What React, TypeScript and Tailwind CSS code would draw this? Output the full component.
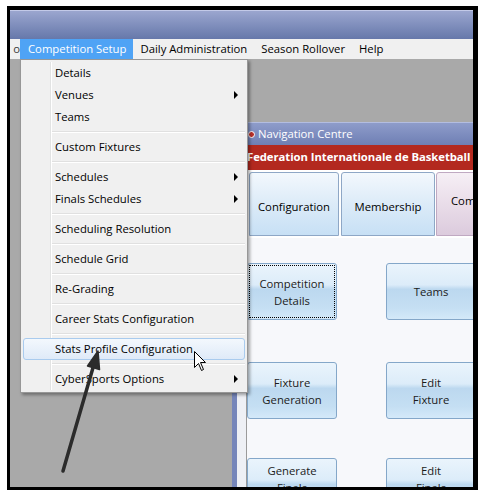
type MenuEntry = { label?: string; sub?: boolean; active?: boolean; sep?: boolean };

const menuItems: MenuEntry[] = [
  { label: 'Details' },
  { label: 'Venues', sub: true },
  { label: 'Teams' },
  { sep: true },
  { label: 'Custom Fixtures' },
  { sep: true },
  { label: 'Schedules', sub: true },
  { label: 'Finals Schedules', sub: true },
  { sep: true },
  { label: 'Scheduling Resolution' },
  { sep: true },
  { label: 'Schedule Grid' },
  { sep: true },
  { label: 'Re-Grading' },
  { sep: true },
  { label: 'Career Stats Configuration' },
  { sep: true },
  { label: 'Stats Profile Configuration', active: true },
  { sep: true },
  { label: 'CyberSports Options', sub: true },
];

function SubArrow() {
  return <div className="ml-auto mr-[7px] h-0 w-0 border-y-[4px] border-l-[4px] border-y-transparent border-l-black" />;
}

function MenuRow({ item }: { item: MenuEntry }) {
  if (item.sep) {
    return (
      <div className="flex h-[8px]">
        <div className="w-[28px] border-r border-[#e2e3e3]" />
        <div className="flex flex-1 items-center border-l border-white">
          <div className="h-[2px] w-full border-t border-b border-t-[#e0e0e0] border-b-white" />
        </div>
      </div>
    );
  }
  if (item.active) {
    return (
      <div className="flex h-[22px] items-center rounded-[3px] border border-[#a9cbee] bg-gradient-to-b from-[#f3f8fd] to-[#dfeaf8] pl-[31px]">
        <span>{item.label}</span>
        {item.sub && <SubArrow />}
      </div>
    );
  }
  return (
    <div className="flex h-[22px]">
      <div className="w-[28px] border-r border-[#e2e3e3]" />
      <div className="flex flex-1 items-center border-l border-white pl-[3px]">
        <span>{item.label}</span>
        {item.sub && <SubArrow />}
      </div>
    </div>
  );
}

function BigButton({ lines, focused, top }: { lines: string[]; focused?: boolean; top?: boolean }) {
  return (
    <div
      className={
        'flex h-[57px] w-[90px] shrink-0 flex-col items-center rounded-[3px] border border-[#84a7c9] bg-[linear-gradient(to_bottom,#eaf4fc_0%,#dcecf9_38%,#bcd8ef_46%,#c5dff3_80%,#d4e9f9_100%)] leading-[17px] text-[#1b1b1b] ' +
        (top ? 'justify-start pt-[3px] ' : 'justify-center ') +
        (focused ? 'outline outline-1 outline-offset-[-3px] outline-dotted outline-black' : '')
      }
    >
      {lines.map((l) => (
        <span key={l}>{l}</span>
      ))}
    </div>
  );
}

export default function App() {
  return (
    <div className="relative h-[496px] w-[485px] overflow-hidden bg-white font-['Open_Sans','Noto_Sans',sans-serif] text-[11.3px] text-black">
      <div className="ml-[7px] mt-[6px] h-[484px] w-[471px] bg-black pb-[3px] pl-[3px] pr-[5px] pt-[4px]">
        <div className="flex h-full w-full flex-col overflow-hidden">
          {/* main title bar */}
          <div className="h-[29px] border-t border-[#c3cae8] bg-gradient-to-b from-[#9ba6cf] to-[#6678aa]" />

          {/* menu bar */}
          <div className="flex h-[20px] items-center bg-[#f0f0f0] leading-[20px]">
            <div className="w-[10px] overflow-hidden text-right text-[#3a3a3a]">o</div>
            <div className="bg-[#4fa3f5] px-[7px] pl-[8px] text-white">Competition Setup</div>
            <div className="px-[7px]">Daily Administration</div>
            <div className="px-[7px]">Season Rollover</div>
            <div className="px-[7px]">Help</div>
          </div>

          {/* MDI area */}
          <div className="relative flex-1 overflow-hidden bg-[#a9a9a9] pl-[222px] pt-[63px]">
            <div className="flex w-[320px] flex-col">
              <div className="flex h-[23px] items-center border-t border-[#b3bde0] bg-gradient-to-b from-[#8e9cca] to-[#6f7fb4] pl-[16px] text-white">
                <div className="mr-[3px] h-[7px] w-[7px] rounded-full border border-white bg-[#b8312a]" />
                <span>Navigation Centre</span>
              </div>
              <div className="flex h-[400px]">
                <div className="w-[5px] bg-[#7686ba]" />
                <div className="w-[10px] border-r border-[#9a9a9a] bg-[#eef0f5]" />
                <div className="flex flex-1 flex-col bg-[#f7f8fb]">
                  <div className="flex h-[25px] items-center bg-[#b3291f] font-bold tracking-[-0.05px] text-white">
                    Federation Internationale de Basketball
                  </div>
                  <div className="flex h-[68px] bg-white pl-[2px] pt-[2px]">
                    <div className="flex h-[64px] w-[90px] items-center justify-center rounded-t-[3px] border border-[#8ea7c6] bg-gradient-to-b from-[#f3f8fd] via-[#dcebf8] to-[#c7e0f5] pt-[6px]">
                      Configuration
                    </div>
                    <div className="ml-[2px] flex h-[64px] w-[94px] items-center justify-center rounded-t-[3px] border border-[#8ea7c6] bg-gradient-to-b from-[#f3f8fd] via-[#dcebf8] to-[#c7e0f5] pt-[6px]">
                      Membership
                    </div>
                    <div className="ml-[1px] flex h-[64px] w-[100px] items-center rounded-t-[3px] border border-[#c0a9c2] bg-gradient-to-b from-[#f6eff5] to-[#dccbdd] pb-[6px] pl-[14px]">
                      Competition
                    </div>
                  </div>
                  <div className="mt-[25px] flex gap-[49px]">
                    <BigButton lines={['Competition', 'Details']} focused />
                    <BigButton lines={['Teams']} />
                  </div>
                  <div className="mt-[42px] flex gap-[49px]">
                    <BigButton lines={['Fixture', 'Generation']} />
                    <BigButton lines={['Edit', 'Fixture']} />
                  </div>
                  <div className="mt-[39px] flex gap-[49px]">
                    <BigButton lines={['Generate', 'Finals']} top />
                    <BigButton lines={['Edit', 'Finals']} top />
                  </div>
                </div>
              </div>
            </div>

            {/* dropdown menu */}
            <div className="absolute left-[10px] top-0 w-[228px] border border-[#979797] bg-[#f0f0f0] p-[2px] shadow-[2px_2px_3px_rgba(0,0,0,0.35)]">
              {menuItems.map((item, i) => (
                <MenuRow key={i} item={item} />
              ))}
            </div>
          </div>
        </div>
      </div>

      {/* annotation arrow + mouse pointer */}
      <svg className="pointer-events-none absolute left-0 top-0" width="485" height="496">
        <line x1="63" y1="471" x2="93.5" y2="366" stroke="#2b2b2b" strokeWidth="3.5" strokeLinecap="round" />
        <polygon points="98,351 87.5,366 99.5,369.5" fill="#2b2b2b" stroke="#2b2b2b" strokeWidth="1.5" strokeLinejoin="round" />
        <path
          d="M194.5 351.5 L194.5 367.5 L198.5 363.5 L201.5 370.5 L203.5 369.5 L200.5 362.5 L205.5 362.5 Z"
          fill="white"
          stroke="black"
          strokeWidth="1"
          strokeLinejoin="round"
        />
      </svg>
    </div>
  );
}
